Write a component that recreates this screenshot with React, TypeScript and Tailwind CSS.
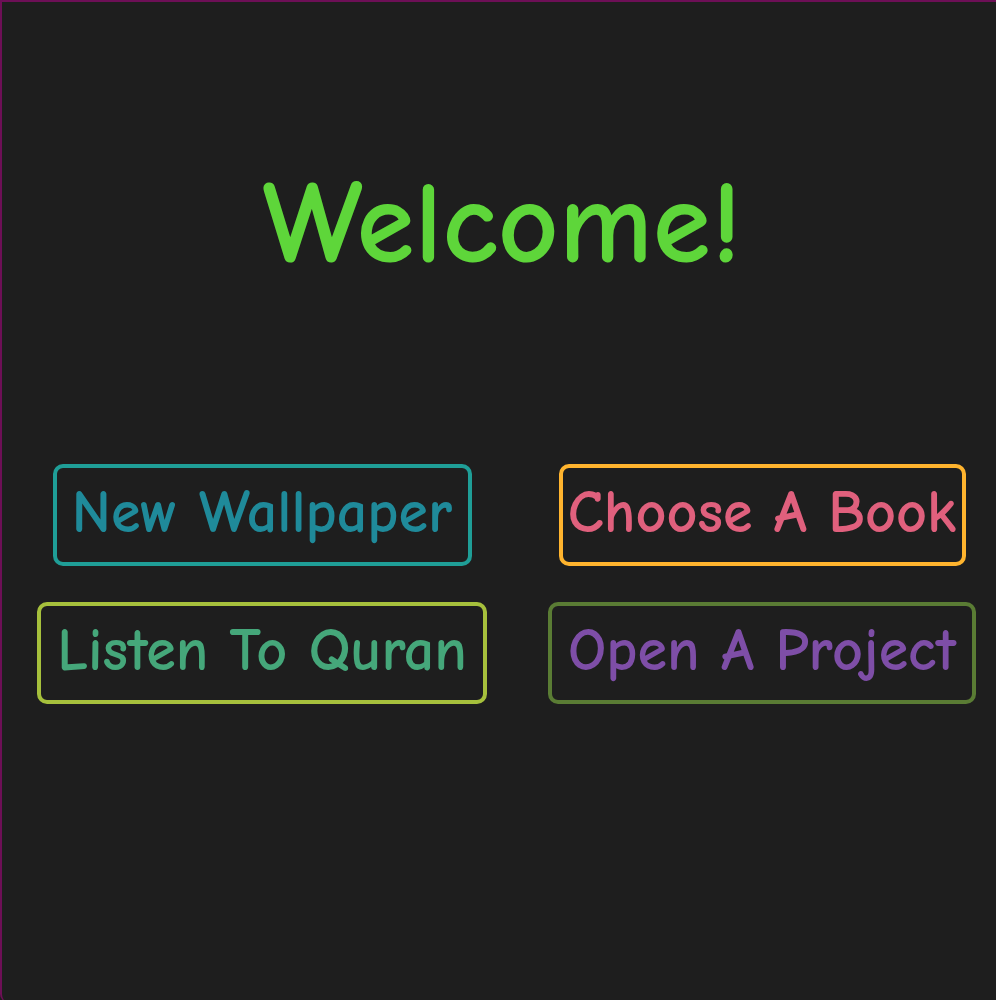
import React from 'react';

type MenuButton = {
  label: string;
  border: string;
  text: string;
  width: string;
};

const buttons: MenuButton[] = [
  { label: 'New Wallpaper', border: 'border-[#1f9e97]', text: 'text-[#1f8a9a]', width: 'w-[419px]' },
  { label: 'Choose A Book', border: 'border-[#ffb42e]', text: 'text-[#e0607d]', width: 'w-[407px]' },
  { label: 'Listen To Quran', border: 'border-[#a6c03c]', text: 'text-[#45a77a]', width: 'w-[450px]' },
  { label: 'Open A Project', border: 'border-[#5a7c34]', text: 'text-[#7e4ea7]', width: 'w-[428px]' },
];

const Button = ({ item }: { item: MenuButton }) => (
  <button
    className={`${item.width} ${item.border} ${item.text} flex h-[102px] items-center justify-center whitespace-nowrap rounded-[10px] border-4 bg-transparent pb-[4px] text-[60px] font-bold leading-none`}
  >
    {item.label}
  </button>
);

const App = () => {
  return (
    <div className="h-[1000px] w-[996px] overflow-hidden bg-[#1e1e1e]">
      <div
        className="h-[1002px] w-[1000px] rounded-bl-[8px] border-l-2 border-t-2 border-[#6d0f56] bg-[#1e1e1e]"
        style={{ fontFamily: '"Comic Sans MS", "Comic Neue", "DejaVu Sans", sans-serif' }}
      >
        <div className="flex w-[996px] flex-col items-center">
          <h1 className="mt-[163px] ml-[4px] text-[118px] font-bold leading-none text-[#5ed63a]">Welcome!</h1>
          <div className="mt-[181px] grid w-[1000px] grid-cols-[524px_476px] gap-y-[36px] pr-[4px]">
            {buttons.map((item, index) => (
              <div key={index} className="flex justify-center">
                <Button item={item} />
              </div>
            ))}
          </div>
        </div>
      </div>
    </div>
  );
};

export default App;
